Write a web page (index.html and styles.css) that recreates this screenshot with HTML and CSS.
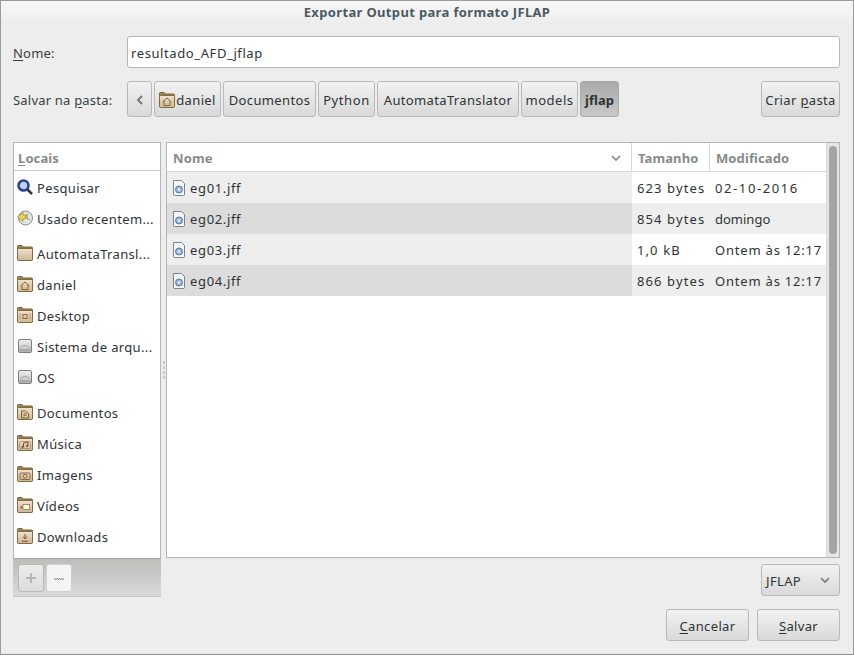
FILE: index.html
```html
<!DOCTYPE html>
<html lang="en">
<head>
    <meta charset="UTF-8">
    <meta name="viewport" content="width=device-width, initial-scale=1.0">
    <title>Exportar Output para formato JFLAP</title>
    <link rel="stylesheet" href="styles.css">
</head>
<body>

    <svg class="defs" width="0" height="0">
        <defs>
            <linearGradient id="tan" x1="0" y1="0" x2="0" y2="1">
                <stop offset="0" stop-color="#efe3cf"/>
                <stop offset="1" stop-color="#cdb592"/>
            </linearGradient>
            <linearGradient id="disk" x1="0" y1="0" x2="0" y2="1">
                <stop offset="0" stop-color="#f0f0ee"/>
                <stop offset="1" stop-color="#bcbebc"/>
            </linearGradient>
        </defs>
        <symbol id="folder" viewBox="0 0 16 16">
            <path d="M.5 4V1.500q0-1 1-1h3.500l1 1.500h8.500q1 0 1 1v11q0 1-1 1h-13q-1 0-1-1z" fill="#9c8159" stroke="#7d6238"/>
            <rect x=".5" y="3.500" width="15" height="12" rx="1" fill="url(#tan)" stroke="#86693f"/>
        </symbol>
        <symbol id="file" viewBox="0 0 16 16">
            <path d="M2.500.5h8l3 3v11q0 1-1 1h-9q-1 0-1-1z" fill="#f4f6f8" stroke="#7c8388"/>
            <circle cx="8" cy="9.500" r="3.500" fill="#9db6d6" stroke="#4a6c9c" stroke-width=".9"/>
            <circle cx="8" cy="9.500" r="1.200" fill="#eef3f8"/>
        </symbol>
        <symbol id="drive" viewBox="0 0 16 16">
            <rect x="1.500" y="1.500" width="13" height="13" rx="1.500" fill="url(#disk)" stroke="#7c7e7c"/>
            <path d="M3 10q5-5 10 0" fill="none" stroke="#a4a6a4"/>
            <rect x="2.500" y="11" width="11" height="2.500" fill="#a8aaa8"/>
        </symbol>
    </svg>

    <div class="window">
        <div class="titlebar">Exportar Output para formato JFLAP</div>

        <div class="content">
            <div class="name-row">
                <label class="field-label"><u>N</u>ome:</label>
                <div class="entry">resultado_AFD_jflap</div>
            </div>

            <div class="path-row">
                <span class="field-label">Salvar na <u>p</u>asta:</span>
                <div class="pathbar">
                    <button class="btn back-btn">
                        <svg width="8" height="10" viewBox="0 0 8 10"><path d="M6 1 2 5l4 4" fill="none" stroke="#777" stroke-width="2"/></svg>
                    </button>
                    <button class="btn crumb crumb-home">
                        <svg class="icon" width="16" height="16"><use href="#folder"/><path d="M3.500 10l4.500-4 4.500 4M5 9v4.500h6V9" fill="none" stroke="#86693f"/></svg>
                        daniel
                    </button>
                    <button class="btn crumb crumb-docs">Documentos</button>
                    <button class="btn crumb crumb-python">Python</button>
                    <button class="btn crumb crumb-automata">AutomataTranslator</button>
                    <button class="btn crumb crumb-models">models</button>
                    <button class="btn crumb crumb-active">jflap</button>
                </div>
                <button class="btn new-folder"><span>Criar <u>p</u>asta</span></button>
            </div>

            <div class="panes">
                <div class="sidebar-col">
                    <div class="sidebar">
                        <div class="col-head places-head"><u>L</u>ocais</div>
                        <ul class="places">
                            <li>
                                <svg class="icon" width="16" height="16" viewBox="0 0 16 16"><path d="m10 10 5 5" stroke="#333" stroke-width="2.500"/><circle cx="6.500" cy="6.500" r="5" fill="#c4d2ee" stroke="#2a4494" stroke-width="2.600"/></svg>
                                Pesquisar
                            </li>
                            <li>
                                <svg class="icon" width="16" height="16" viewBox="0 0 16 16"><circle cx="8.500" cy="8" r="7" fill="#e4e4e0" stroke="#8a8a86"/><path d="M10 4v4l2.500 2" fill="none" stroke="#777"/><path d="M.5 7l5.500-4.500v2.500h2.500v4H6v2.500z" fill="#edd04e" stroke="#a38a24" stroke-width=".7"/></svg>
                                Usado recentem...
                            </li>
                            <li class="sep-before">
                                <svg class="icon" width="16" height="16"><use href="#folder"/></svg>
                                AutomataTransl...
                            </li>
                            <li>
                                <svg class="icon" width="16" height="16"><use href="#folder"/><path d="M3.500 10l4.500-4 4.500 4M5 9v4.500h6V9" fill="none" stroke="#86693f"/></svg>
                                daniel
                            </li>
                            <li>
                                <svg class="icon" width="16" height="16"><use href="#folder"/><rect x="6" y="7.500" width="4" height="4" fill="none" stroke="#86693f"/><path d="M3 6.500v6M13 6.500v6" stroke="#86693f" stroke-dasharray="1 1"/></svg>
                                Desktop
                            </li>
                            <li>
                                <svg class="icon" width="16" height="16"><use href="#drive"/></svg>
                                Sistema de arqu...
                            </li>
                            <li>
                                <svg class="icon" width="16" height="16"><use href="#drive"/></svg>
                                OS
                            </li>
                            <li class="sep-before">
                                <svg class="icon" width="16" height="16"><use href="#folder"/><path d="M4.500 7h4l3 2.500V14h-7z" fill="none" stroke="#7d6238"/><path d="M7 9.500h2v2H7z" fill="none" stroke="#7d6238" stroke-width=".7"/></svg>
                                Documentos
                            </li>
                            <li>
                                <svg class="icon" width="16" height="16"><use href="#folder"/><rect x="2.500" y="6.500" width="11" height="7" rx="1" fill="none" stroke="#a08658" stroke-width=".7"/><path d="M6.500 12V8l4.500-1v4" fill="none" stroke="#6e5430"/><circle cx="5.500" cy="12" r="1.100" fill="#6e5430"/><circle cx="10" cy="11" r="1.100" fill="#6e5430"/></svg>
                                Música
                            </li>
                            <li>
                                <svg class="icon" width="16" height="16"><use href="#folder"/><rect x="3" y="7" width="10" height="6.500" rx="1" fill="none" stroke="#86693f"/><circle cx="8" cy="10.200" r="2" fill="none" stroke="#86693f"/></svg>
                                Imagens
                            </li>
                            <li>
                                <svg class="icon" width="16" height="16"><use href="#folder"/><rect x="6" y="7.500" width="6.500" height="5" fill="#fff8ea" stroke="#86693f" stroke-width=".7"/><path d="M3.500 8.500l2 1v1.500l-2 1z" fill="#86693f"/></svg>
                                Vídeos
                            </li>
                            <li>
                                <svg class="icon" width="16" height="16"><use href="#folder"/><path d="M8 6v4.500M6 8.800l2 2 2-2M5 13.200h6" fill="none" stroke="#6e5430"/></svg>
                                Downloads
                            </li>
                        </ul>
                    </div>
                    <div class="sidebar-tools">
                        <button class="btn tool-btn tool-plus">
                            <svg width="12" height="12" viewBox="0 0 12 12"><path d="M6 1v10M1 6h10" stroke="#b4b6b6" stroke-width="2"/></svg>
                        </button>
                        <button class="btn tool-btn tool-minus">
                            <svg width="10" height="3" viewBox="0 0 10 3"><path d="M0 2q.6-1.400 1.250 0t1.250 0 1.250 0 1.250 0 1.250 0 1.250 0 1.250 0 1.250 0" fill="none" stroke="#555" stroke-width=".8"/></svg>
                        </button>
                    </div>
                </div>

                <div class="grip"><i></i><i></i><i></i><i></i></div>

                <div class="files-col">
                    <div class="files">
                        <div class="file-list">
                            <div class="file-row list-head">
                                <div class="col-head col-name">Nome
                                    <svg width="10" height="7" viewBox="0 0 10 7"><path d="M1 1l4 4 4-4" fill="none" stroke="#888" stroke-width="1.600"/></svg>
                                </div>
                                <div class="col-head col-size">Tamanho</div>
                                <div class="col-head col-date">Modificado</div>
                            </div>
                            <div class="file-row">
                                <div class="cell col-name"><svg class="icon" width="16" height="16"><use href="#file"/></svg>eg01.jff</div>
                                <div class="cell col-size">623 bytes</div>
                                <div class="cell col-date date-num">02-10-2016</div>
                            </div>
                            <div class="file-row">
                                <div class="cell col-name"><svg class="icon" width="16" height="16"><use href="#file"/></svg>eg02.jff</div>
                                <div class="cell col-size">854 bytes</div>
                                <div class="cell col-date date-word">domingo</div>
                            </div>
                            <div class="file-row">
                                <div class="cell col-name"><svg class="icon" width="16" height="16"><use href="#file"/></svg>eg03.jff</div>
                                <div class="cell col-size">1,0 kB</div>
                                <div class="cell col-date">Ontem às 12:17</div>
                            </div>
                            <div class="file-row">
                                <div class="cell col-name"><svg class="icon" width="16" height="16"><use href="#file"/></svg>eg04.jff</div>
                                <div class="cell col-size">866 bytes</div>
                                <div class="cell col-date">Ontem às 12:17</div>
                            </div>
                        </div>
                        <div class="scrollbar"><div class="thumb"></div></div>
                    </div>
                    <div class="filter-row">
                        <button class="btn combo">JFLAP
                            <svg width="10" height="7" viewBox="0 0 10 7"><path d="M1 1l4 4 4-4" fill="none" stroke="#777" stroke-width="1.600"/></svg>
                        </button>
                    </div>
                </div>
            </div>

            <div class="actions">
                <button class="btn action-btn"><span><u>C</u>ancelar</span></button>
                <button class="btn action-btn"><span><u>S</u>alvar</span></button>
            </div>
        </div>
    </div>

</body>
</html>
```

FILE: styles.css
```css
* {
    box-sizing: border-box;
}
html, body {
    margin: 0;
    height: 100%;
}
body {
    font-family: 'Noto Sans', sans-serif;
    font-size: 13px;
    letter-spacing: .35px;
    color: #2e3436;
    background: #ededed;
    overflow: hidden;
}
u {
    text-underline-offset: 2px;
}
.defs {
    display: block;
    height: 0;
}
.window {
    width: 854px;
    height: 655px;
    background: #ededed;
    border: 1px solid #9a9c9c;
    border-bottom-color: #8c8e8e;
    display: flex;
    flex-direction: column;
}
.titlebar {
    height: 23px;
    text-align: center;
    font-weight: 700;
    line-height: 22px;
    color: #4b5a64;
    background: linear-gradient(#f8f8f8, #ededed);
}
.content {
    flex: 1;
    padding: 12px 13px 0 12px;
    display: flex;
    flex-direction: column;
}
.field-label {
    display: block;
    width: 114px;
    flex-shrink: 0;
    padding-top: 1px;
    letter-spacing: .2px;
    color: #3a3f40;
}
.name-row, .path-row {
    display: flex;
    align-items: center;
}
.entry {
    flex: 1;
    height: 32px;
    line-height: 32px;
    padding-left: 3px;
    letter-spacing: .6px;
    background: #fff;
    border: 1px solid #b4b6b6;
    border-radius: 3px;
}
.path-row {
    margin-top: 13px;
    height: 36px;
}
.pathbar {
    flex: 1;
    display: flex;
    gap: 2px;
    height: 36px;
}
.btn {
    font: inherit;
    letter-spacing: inherit;
    color: #2e3436;
    height: 100%;
    padding: 1px 0 0;
    border: 1px solid #b8baba;
    border-radius: 3px;
    background: linear-gradient(#f2f2f2, #d9d9d9);
    display: flex;
    align-items: center;
    justify-content: center;
    white-space: nowrap;
}
.back-btn { width: 25px; }
.crumb-home { width: 67px; }
.crumb-home .icon { margin-right: 1px; }
.crumb-docs { width: 93px; }
.crumb-python { width: 57px; letter-spacing: .6px; }
.crumb-automata { width: 142px; }
.crumb-models { width: 57px; letter-spacing: .5px; }
.crumb-active {
    width: 39px;
    font-weight: 700;
    letter-spacing: 0;
    background: linear-gradient(#a9aba8, #c8c9c7);
    border-color: #a8aaa8;
}
.new-folder {
    width: 79px;
    height: 36px;
}
.panes {
    display: flex;
    margin-top: 25px;
}
.sidebar-col {
    width: 148px;
    display: flex;
    flex-direction: column;
}
.sidebar {
    height: 416px;
    background: #fff;
    border: 1px solid #b4b6b6;
    border-bottom: none;
}
.col-head {
    height: 28px;
    line-height: 30px;
    padding-left: 6px;
    font-weight: 700;
    letter-spacing: .1px;
    color: #888a8a;
    background: #fff;
    border-bottom: 1px solid #d8d8d8;
}
.places-head {
    padding-left: 4px;
    border-bottom-color: #c8c8c8;
}
.places {
    list-style: none;
    margin: 0;
    padding: 0;
}
.places li {
    height: 31px;
    padding: 2px 0 0 3px;
    display: flex;
    align-items: center;
    gap: 4px;
    white-space: nowrap;
    overflow: hidden;
}
.places .icon {
    margin-top: -2px;
}
.places li.sep-before {
    margin-top: 4px;
}
.sidebar-tools {
    height: 39px;
    padding: 5px 0 0 5px;
    display: flex;
    gap: 2px;
    background: linear-gradient(#bcbeba, #d9dad8);
    border-top: 1px solid #a8aaa8;
    border-bottom: 1px solid #c4c5c4;
}
.tool-btn {
    width: 26px;
    height: 28px;
    padding: 0;
}
.tool-plus {
    background: linear-gradient(#ececec, #dcdcdc);
}
.tool-minus {
    background: #f4f4f2;
    border-color: #d0d0ce;
}
.grip {
    width: 5px;
    padding-top: 219px;
    display: flex;
    flex-direction: column;
    align-items: center;
    gap: 2px;
}
.grip i {
    width: 2px;
    height: 3px;
    background: #c8c8c8;
}
.files-col {
    flex: 1;
}
.files {
    height: 416px;
    background: #fff;
    border: 1px solid #b4b6b6;
    display: flex;
}
.file-list {
    flex: 1;
}
.file-row {
    display: flex;
    height: 31px;
}
.file-row.list-head {
    height: 29px;
}
.col-name { width: 465px; }
.col-size { width: 78px; }
.col-date { flex: 1; }
.list-head .col-head {
    height: 29px;
    border-right: 1px solid #d8d8d8;
}
.list-head .col-date {
    border-right: none;
}
.list-head .col-name {
    display: flex;
    align-items: center;
    justify-content: space-between;
    padding: 2px 10px 0 6px;
}
.cell {
    line-height: 33px;
    padding-left: 5px;
    letter-spacing: .8px;
    white-space: nowrap;
    overflow: hidden;
}
.cell.col-size {
    letter-spacing: 1.1px;
}
.cell.date-num {
    letter-spacing: 1.6px;
}
.cell.date-word {
    letter-spacing: 0;
}
.cell.col-name {
    display: flex;
    align-items: center;
    gap: 3px;
    padding: 2px 0 0 4px;
    letter-spacing: .65px;
    background: #eeeeee;
}
.cell .icon {
    margin-top: -2px;
}
.file-row:nth-child(odd) .cell {
    background: #eeeeee;
}
.file-row:nth-child(odd) .cell.col-name {
    background: #dcdcdc;
}
.scrollbar {
    width: 13px;
    padding: 3px 2px 3px 2px;
    background: #e6e6e6;
    border-left: 1px solid #d8d8d8;
}
.thumb {
    height: 100%;
    border-radius: 4px;
    background: #a4a6a6;
}
.filter-row {
    display: flex;
    justify-content: flex-end;
    margin-top: 6px;
}
.combo {
    width: 79px;
    height: 32px;
    justify-content: space-between;
    padding: 1px 9px 0 4px;
}
.actions {
    display: flex;
    justify-content: flex-end;
    gap: 8px;
    margin-top: 12px;
}
.action-btn {
    width: 83px;
    height: 32px;
}
```
